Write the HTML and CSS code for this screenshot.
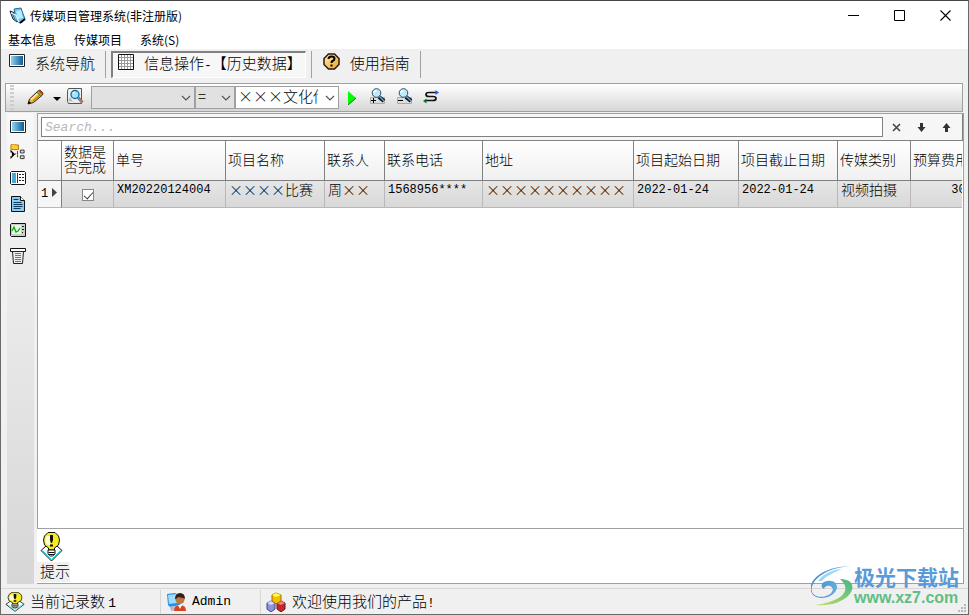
FILE: index.html
```html
<!DOCTYPE html>
<html lang="zh-CN">
<head>
<meta charset="utf-8">
<title>传媒项目管理系统(非注册版)</title>
<link rel="stylesheet" href="styles.css">
</head>
<body>
<svg class="defs" aria-hidden="true">
  <defs>
    <linearGradient id="blue" x1="0" x2="1"><stop offset="0" stop-color="#8fd3f5"/><stop offset="1" stop-color="#0d5c94"/></linearGradient>
    <linearGradient id="gold" x1="0" y1="0" x2="1" y2="1"><stop offset="0" stop-color="#fff3b0"/><stop offset="1" stop-color="#f0a020"/></linearGradient>
    <linearGradient id="swirl" x1="0" x2="1"><stop offset="0" stop-color="#4a86c8"/><stop offset="1" stop-color="#6cc8f0"/></linearGradient>
    <linearGradient id="leaf" x1="0" y1="1" x2="1" y2="0"><stop offset="0" stop-color="#c8e05c"/><stop offset="1" stop-color="#42b58c"/></linearGradient>
    <symbol id="screen" viewBox="0 0 16 13"><path d="M.5.5h15v12H.5z" fill="#fff" stroke="#222"/><path d="M2 2h12v9H2z" fill="url(#blue)"/></symbol>
    <symbol id="bulb" viewBox="0 0 23 30" preserveAspectRatio="none">
      <path d="M1 18.500 11.500 9 22 18.500 11.500 29z" fill="#fff" stroke="#111"/>
      <path d="M2.500 18.500 11.500 27.500l9-9" fill="none" stroke="#22dede"/>
      <path d="M8 .5h7l3.500 3.500 1 4-1 5-4 3v2h-6v-2l-4-3-1-5 1-4z" fill="#f4ec20" stroke="#111"/>
      <path d="M7 4h3v9H8L5.500 11V6z" fill="#fffde0"/><path d="M10 3h3v5l-1 3h-1l-1-3zM10 12.500h3v2h-3z" fill="#111"/>
      <path d="M8 18h7v4l-2.500 2h-2L8 22z" fill="#fff" stroke="#111"/><path d="M8.500 20.500h6M9 22.500h5" stroke="#111"/>
    </symbol>
    <symbol id="lens" viewBox="0 0 17 17">
      <path d="M1.500 9.500h14v6h-14z" fill="#ddd" stroke="#aaa"/><path d="M10 9l5 4" stroke="#111" stroke-width="4"/><path d="M10 8l5 5" stroke="#5aa8dc" stroke-width="1.500"/>
      <circle cx="7.500" cy="5" r="4.300" fill="#bfe9fb" stroke="#24506c"/><path d="M5 5a2.500 2.500 0 0 1 2.500-2.500" fill="none" stroke="#fff" stroke-width="1.500"/>
    </symbol>
    <symbol id="chevron" viewBox="0 0 10 6"><path d="M1 1l4 4 4-4" fill="none" stroke="#555" stroke-width="1.200"/></symbol>
  </defs>
</svg>
<div class="window">
  <header class="titlebar">
    <svg class="app-icon" viewBox="0 0 17 17"><path d="M1 4l5 2 2 9-4-3z" fill="#fff" stroke="#111"/><path d="M5 2l7-1 1 3 3 8-5 4-5-3-3-7 3 1z" fill="#65c4f2" stroke="#2b6c98"/><path d="M7 4l5-1 2 8-5 1z" fill="#bfeaff"/><path d="M2 6l5 2 3 7" fill="none" stroke="#fff"/><path d="M16 12l-5 4" stroke="#000" stroke-width="2"/></svg>
    <h1>传媒项目管理系统(非注册版)</h1>
    <div class="caption-buttons">
      <button aria-label="最小化"><svg viewBox="0 0 11 11"><path d="M0 5.500h11" stroke="#000"/></svg></button>
      <button aria-label="最大化"><svg viewBox="0 0 11 11"><path d="M.5.5h10v10H.5z" fill="none" stroke="#000"/></svg></button>
      <button aria-label="关闭"><svg viewBox="0 0 11 11"><path d="M.5.5l10 10M10.500.5l-10 10" stroke="#000" stroke-width="1.100"/></svg></button>
    </div>
  </header>
  <nav class="menubar">
    <button>基本信息</button><button>传媒项目</button><button>系统(S)</button>
  </nav>
  <nav class="tabs">
    <button class="tab"><svg class="i-screen"><use href="#screen"/></svg>系统导航</button>
    <button class="tab pressed"><svg class="i-grid" viewBox="0 0 17 17"><path d="M.5.5h15v15H.5z" fill="#fff" stroke="#111"/><path d="M3.500 1v14M6.500 1v14M9.500 1v14M12.500 1v14M1 3.500h14M1 6.500h14M1 9.500h14M1 12.500h14" stroke="#999"/></svg><span>信息操作<span class="latin">-</span>【历史数据】</span></button>
    <button class="tab"><svg class="i-help" viewBox="0 0 17 17"><path d="M5.500 1h6L16 5.500v6L11.500 16h-6L1 11.500v-6z" fill="url(#gold)" stroke="#301808" stroke-width="1.500"/><path d="M5.500 6q0-2.500 3-2.500t3 2.200q0 1.500-2 2.300-1 .5-1 2" fill="none" stroke="#000" stroke-width="2"/><path d="M7.500 11.500h2v2h-2z"/></svg>使用指南</button>
  </nav>
  <div class="toolbar">
    <div class="grip"></div>
    <button class="tool pencil" aria-label="编辑"><svg viewBox="0 0 17 16"><path d="M1 15l1.500-5 9-8.500 1.500-.5 3 3-.5 2-9 7.500z" fill="#f6b834" stroke="#222"/><path d="M4 10.500l7-6.500" stroke="#fff0a0" stroke-width="1.500"/><path d="M6 12l7-6" stroke="#b06a10"/><path d="M11 2l2-1 3 3-1 2z" fill="#e83818"/><path d="M10 3l4 4" stroke="#3a9a58" stroke-width="1.500"/><path d="M1 15l.8-3 2.200 2z"/></svg></button>
    <button class="tool drop" aria-label="更多编辑"><svg viewBox="0 0 8 4"><path d="M0 0h8L4 4z"/></svg></button>
    <button class="tool find" aria-label="查找"><svg viewBox="0 0 17 17"><path d="M1.500.5h13v15h-13l-1-2v-11z" fill="#eee" stroke="#555"/><path d="M1 13l2-4 3 5 9 1" fill="#bbb"/><circle cx="8" cy="6.500" r="4" fill="#a5e3fc" stroke="#176a9b" stroke-width="1.300"/><path d="M6 6q0-2 2-2" fill="none" stroke="#fff"/><path d="M11 9.500l4.500 5" stroke="#c8552b" stroke-width="3"/><path d="M11 10l4 4" stroke="#48a5e0" stroke-width="1.300"/></svg></button>
    <div class="combo field"><select aria-label="字段" disabled><option></option></select><svg><use href="#chevron"/></svg></div>
    <div class="combo operator"><select aria-label="条件" disabled><option>=</option></select><svg><use href="#chevron"/></svg></div>
    <div class="combo value"><select aria-label="值"><option>×××文化传媒</option></select><svg><use href="#chevron"/></svg></div>
    <button class="tool run" aria-label="执行"><svg viewBox="0 0 9 14"><path d="M0 0v14l8-7z" fill="#0f0"/><path d="M0 14l8-7" stroke="#161"/></svg></button>
    <button class="tool lens" aria-label="放大"><svg viewBox="0 0 17 17"><use href="#lens"/><path d="M2 12.500h5M4.500 10v5" stroke="#000"/></svg></button>
    <button class="tool lens" aria-label="缩小"><svg viewBox="0 0 17 17"><use href="#lens"/><path d="M2 12.500h5" stroke="#000"/></svg></button>
    <button class="tool refresh" aria-label="刷新"><svg viewBox="0 0 17 14"><path d="M14 2.500H6Q3 2.500 3 4.500t3 2h4q3 0 3 2t-3 2H3" fill="none" stroke="#111" stroke-width="1.700"/><path d="M12.500 0l3.500 2.500-3.500 2.500z" fill="#2457ff"/><path d="M3.500 8.500v5L0 11z" fill="#087820"/></svg></button>
  </div>
  <div class="body">
    <aside class="side">
      <button aria-label="导航"><svg class="i-screen"><use href="#screen"/></svg></button>
      <button aria-label="流程"><svg viewBox="0 0 16 17"><path d="M.5 1l1-1h3l1 1h3v5h-8z" fill="#ffc83c" stroke="#b77700"/><path d="M0 6l5 5-5 5v-3h1.500v-4H0z"/><path d="M5 10.500h3M7.500 8v6M7 8.500h2M7 13.500h2" stroke="#111" stroke-dasharray="1 1"/><path d="M10.500 6.500h4v3h-4zM10.500 12.500h4v3h-4z" fill="#ddd" stroke="#333"/></svg></button>
      <button aria-label="表单"><svg viewBox="0 0 16 14"><path d="M1.500.5h13l1 1v11l-1 1h-13l-1-1v-11z" fill="#fff" stroke="#111"/><path d="M2 2h4v10H2z" fill="#49a7d8"/><path d="M7.500 2v10" stroke="#333"/><path d="M9 3.500h2M12 3.500h2M9 6.500h2M12 6.500h2M9 9.500h2M12 9.500h2" stroke="#222"/></svg></button>
      <button aria-label="文档"><svg viewBox="0 0 16 16"><path d="M1.500.5h9l4 4v11h-13z" fill="#86cdf4" stroke="#111"/><path d="M10.500.5v4h4" fill="#fff" stroke="#111"/><path d="M3.500 3.500h5M3.500 6.500h8M3.500 8.500h9M3.500 10.500h9M3.500 12.500h7" stroke="#123a5c"/></svg></button>
      <button aria-label="图表"><svg viewBox="0 0 16 14"><path d="M1.500.5h14v13h-14l-1-1v-11z" fill="#ccc" stroke="#111"/><path d="M2 2h9v9H2z" fill="#dcffdc"/><path d="M2 8l2-4 2 5 2-1 2-3" fill="none" stroke="#1aa01a" stroke-width="1.300"/><path d="M12 3.500h2M12 6.500h2M12 9.500h1" stroke="#222"/></svg></button>
      <button aria-label="打印"><svg viewBox="0 0 16 16"><path d="M.5.5h15v3H.5z" fill="#fff" stroke="#111"/><path d="M2.500 3.500h11l-1 12h-9z" fill="#eee" stroke="#222"/><path d="M5 5.500h6M5 7.500h6M5 9.500h6M5 11.500h6M5 13.500h6" stroke="#777"/></svg></button>
    </aside>
    <main class="content">
      <section class="grid">
        <div class="search">
          <input type="text" placeholder="Search..." aria-label="搜索">
          <button aria-label="清除"><svg viewBox="0 0 9 9"><path d="M1 1l7 7M8 1L1 8" stroke="#444" stroke-width="1.600"/></svg></button>
          <button aria-label="下一个"><svg viewBox="0 0 9 9"><path d="M3 0h3v4h2.500l-4 5-4-5H3z" fill="#333"/></svg></button>
          <button aria-label="上一个"><svg viewBox="0 0 9 9"><path d="M3 9h3V5h2.500l-4-5-4 5H3z" fill="#333"/></svg></button>
        </div>
        <div class="table-wrap">
        <table>
          <colgroup><col class="c-row"><col class="c-done"><col class="c-no"><col class="c-name"><col class="c-who"><col class="c-tel"><col class="c-addr"><col class="c-from"><col class="c-to"><col class="c-kind"><col class="c-cost"></colgroup>
          <thead><tr><th></th><th class="wrap">数据是<br>否完成</th><th>单号</th><th>项目名称</th><th>联系人</th><th>联系电话</th><th>地址</th><th>项目起始日期</th><th>项目截止日期</th><th>传媒类别</th><th>预算费用</th></tr></thead>
          <tbody><tr>
            <td class="row-no"><span>1</span><svg viewBox="0 0 5 9"><path d="M0 0v9l5-4.500z" fill="#444"/></svg></td>
            <td class="done"><input type="checkbox" checked aria-label="数据是否完成"></td>
            <td class="mono">XM20220124004</td><td>××××比赛</td><td>周××</td><td class="mono">1568956****</td><td>××××××××××</td><td class="mono">2022-01-24</td><td class="mono">2022-01-24</td><td>视频拍摄</td><td class="mono cost">3000</td>
          </tr></tbody>
        </table>
        </div>
      </section>
      <section class="tip">
        <svg class="i-bulb"><use href="#bulb"/></svg>
        <h2>提示</h2>
      </section>
    </main>
  </div>
  <footer class="status">
    <div><svg><use href="#bulb"/></svg><span>当前记录数 <span class="latin">1</span></span></div>
    <div><svg viewBox="0 0 20 20"><path d="M1 2l8-1 4 2 1 10-10 2-2-2z" fill="#2d8fdc"/><path d="M2 3l9-1v9l-8 1z" fill="#9edcff"/><path d="M4 15l6-1 2 4-7 1z" fill="#a7bdd8"/><path d="M8 19q0-6 6-6t6 6z" fill="#d8441c"/><path d="M12 13h4l-2 4z" fill="#fff"/><circle cx="14" cy="7.500" r="4.500" fill="#c27442"/><path d="M9 7q0-6 5-6t5 6l-2-1-5-1-2 2z" fill="#352018"/></svg><span class="latin">Admin</span></div>
    <div><svg viewBox="0 0 20 20"><path d="M1 11l4-2 4 2v6l-4 3-4-3z" fill="#8f92df" stroke="#44457e"/><path d="M1 11l4 2 4-2-4-2z" fill="#d9d9ff"/><path d="M11 11l4-2 4 2v6l-4 3-4-3z" fill="#c5272b" stroke="#661619"/><path d="M11 11l4 2 4-2-4-2z" fill="#f38383"/><path d="M6 3l4-2 5 2v6l-5 3-4-3z" fill="#f5bd00" stroke="#a06d00"/><path d="M6 3l4 2 5-2-5-2z" fill="#ffff45"/></svg><span>欢迎使用我们的产品<span class="latin">!</span></span></div>
    <svg class="resize" viewBox="0 0 9 9"><path d="M6 0h2v2H6zM3 3h2v2H3zM6 3h2v2H6zM0 6h2v2H0zM3 6h2v2H3zM6 6h2v2H6z" fill="#b8b8b8"/></svg>
  </footer>
  <div class="watermark">
    <svg viewBox="0 0 45 40"><path d="M44 0C24 0 7 8 2 18c-5 10 4 15 13 12 7-2 9-8 4-10-3-1-6 1-6 3-4-2-3-7 3-8 8-2 13 5 8 11-6 8-22 8-24-1C-3 12 16-1 44 0z" fill="url(#swirl)"/><path d="M7 15C12 8 20 4 31 3 22 7 15 10 11 15z" fill="#9fd6f5"/><path d="M29 13c13 0 16 9 8 17-8 7-18 10-33 9 14-2 25-6 29-12 3-5 1-9-4-14z" fill="url(#leaf)"/></svg>
    <p><strong>极光下载站</strong><b>www.xz7.com</b></p>
  </div>
</div>
</body>
</html>
```
FILE: styles.css
```css
* { box-sizing: border-box; }
body {
  margin: 0;
  font: 300 15px/20px "Noto Sans CJK SC", "Liberation Sans", sans-serif;
  color: #000;
}
h1, h2, p { margin: 0; font-weight: inherit; }
button { border: 0; padding: 0; background: none; color: inherit; font: inherit; display: flex; align-items: center; }
svg { display: block; flex: none; }
.defs { position: absolute; width: 0; height: 0; }
.latin { font-family: "Liberation Mono", monospace; font-size: 13px; }

.window {
  position: relative;
  display: flex;
  flex-direction: column;
  height: 100vh;
  border: 1px solid #6a6a6a;
  border-top-color: #444;
  background: #f0f0f0;
  overflow: hidden;
}

.titlebar { display: flex; align-items: center; height: 29px; padding-left: 8px; background: #fff; font-weight: 400; }
.titlebar h1 { flex: 1; margin-left: 4px; font-size: 12px; }
.app-icon { width: 17px; height: 17px; }
.caption-buttons { display: flex; }
.caption-buttons button { width: 46px; height: 28px; justify-content: center; }
.caption-buttons svg { width: 11px; height: 11px; }

.menubar { display: flex; gap: 18px; height: 19px; padding-left: 7px; background: #fff; font-size: 12px; font-weight: 400; }

.tabs { display: flex; height: 34px; padding: 2px 0 5px; }
.tab { padding: 0 10px 4px 8px; border-right: 1px solid #a0a0a0; gap: 10px; }
.tab svg { align-self: flex-start; margin-top: 3px; }
.tab.pressed {
  margin: 0 5px;
  padding: 0 3px 2px 5px;
  gap: 9px;
  border: 1px solid #fff;
  border-top: 2px solid #808080;
  border-left: 2px solid #808080;
  background: #f7f7f7;
}
.tab.pressed svg { margin-top: 1px; }
.tab.pressed + .tab { border-left: 1px solid #a0a0a0; padding-left: 11px; }
.i-screen { width: 16px; height: 13px; }
.i-grid, .i-help { width: 17px; height: 17px; }
.tab .i-help { margin-top: 2px; }

.toolbar {
  display: flex;
  align-items: center;
  height: 29px;
  margin: 0 5px 0 4px;
  border: 1px solid #a0a0a0;
  background: linear-gradient(#fff, #d6d6d6);
}
.grip { width: 4px; height: 25px; margin: 0 13px 0 4px; border: dotted #ccc; border-width: 0 2px; }
.tool { justify-content: center; height: 26px; padding-bottom: 2px; }
.tool svg { width: 17px; height: 17px; }
.pencil svg { height: 16px; }
.drop { width: 8px; margin: 0 6px 0 9px; padding-top: 5px; }
.drop svg { width: 8px; height: 4px; }
.combo { position: relative; height: 23px; }
.combo select {
  display: block;
  width: 100%;
  height: 100%;
  padding: 0 20px 3px 2px;
  border: 1px solid #a0a0a0;
  border-radius: 0;
  background: #fff;
  appearance: none;
  color: #000;
  font: inherit;
  line-height: 18px;
  opacity: 1;
}
.combo select:disabled { background: #e1e1e1; }
.combo svg { position: absolute; right: 4px; top: 9px; width: 10px; height: 6px; pointer-events: none; }
.field { width: 104px; margin-left: 7px; }
.operator { width: 40px; }
.value { width: 104px; }
.run { margin: 0 12px 0 9px; padding: 0; }
.tool.run svg { width: 9px; height: 14px; }
.lens { margin-right: 10px; }
.tool.refresh svg { height: 14px; }

.body { display: flex; flex: 1; min-height: 0; padding: 1px 4px 4px 6px; }
.side { width: 27px; margin-right: 3px; background: linear-gradient(#f8f8f8, #d6d6d6); }
.side button { width: 22px; height: 26px; justify-content: center; }
.side svg { width: 16px; height: 16px; }
.side .i-screen { height: 13px; }
.content { display: flex; flex-direction: column; flex: 1; min-width: 0; }
.grid { flex: 1; min-height: 0; border: 1px solid #a0a0a0; background: #fff; overflow: hidden; }

.search {
  display: flex;
  align-items: center;
  height: 27px;
  padding: 0 3px;
  border: solid #808080;
  border-width: 0 1px 1px 0;
  background: #f6f6f6;
}
.search input {
  flex: 1;
  min-width: 0;
  height: 20px;
  margin-right: 1px;
  padding: 0 3px;
  border: 1px solid #808080;
  font: italic 13px/18px "Liberation Mono", monospace;
}
.search input::placeholder { color: #b8b8b8; }
.search button { width: 25px; height: 20px; justify-content: center; }
.search svg { width: 9px; height: 9px; }

.table-wrap { overflow: hidden; margin-right: 1px; }
table { width: 0; table-layout: fixed; border-collapse: separate; border-spacing: 0; font-size: 14px; }
.c-row { width: 24px; }
.c-done { width: 52px; }
.c-no { width: 112px; }
.c-name { width: 99px; }
.c-who { width: 60px; }
.c-tel { width: 98px; }
.c-addr { width: 151px; }
.c-from { width: 105px; }
.c-to { width: 99px; }
.c-kind { width: 73px; }
.c-cost { width: 73px; }
th, td { white-space: nowrap; text-align: left; border-right: 1px solid #808080; }
th {
  height: 40px;
  padding: 0 2px 3px;
  border-bottom: 1px solid #808080;
  background: linear-gradient(#fff, #f0f0f0);
  font-weight: inherit;
}
th.wrap { line-height: 15px; }
td {
  height: 27px;
  padding: 0 3px;
  border-color: #b8b8b8;
  border-bottom: 1px solid #b8b8b8;
  background: linear-gradient(#e6e6e6, #d8d8d8);
  line-height: 16px;
  vertical-align: top;
}
.mono, .row-no { font-family: "Liberation Mono", monospace; font-size: 12px; }
.mono { line-height: 18px; }
.cost { text-align: right; }
.row-no { border-right-color: #808080; background: #f6f6f6; line-height: 26px; }
.row-no svg { display: inline-block; width: 5px; height: 9px; margin-left: 4px; }
td.done { text-align: center; }
.done input { appearance: none; position: relative; width: 12px; height: 12px; margin: 8px 0 0; border: 1px solid #888; background: #fff; }
.done input:checked::after {
  content: "";
  position: absolute;
  left: 3px;
  top: 0;
  width: 4px;
  height: 8px;
  border: solid #444;
  border-width: 0 1px 1px 0;
  transform: rotate(42deg);
}

.tip { height: 55px; padding-top: 3px; border: solid #a0a0a0; border-width: 0 1px 1px 0; background: #fff; }
.i-bulb { width: 23px; height: 30px; margin-left: 3px; }
.tip h2 { width: 33px; padding: 0 0 2px 3px; background: #f0f0f0; font-size: 15px; line-height: 18px; }

.status { display: grid; grid-template-columns: 160px 100px 1fr auto; height: 26px; border-top: 1px solid #d7d7d7; }
.status div { display: flex; align-items: center; gap: 5px; padding-left: 4px; margin-top: 1px; border-right: 1px solid #d7d7d7; }
.status div + div { padding-left: 5px; gap: 6px; }
.status div:nth-child(3) { border: 0; }
.status div > svg { width: 20px; height: 20px; }
.status .resize { width: 9px; height: 9px; align-self: end; margin: 0 1px 1px 0; }

.watermark { position: absolute; right: 9px; bottom: 6px; display: flex; align-items: center; pointer-events: none; }
.watermark svg { width: 45px; height: 40px; margin-right: -2px; }
.watermark p { display: flex; flex-direction: column; }
.watermark strong { color: #5b9ad8; font-size: 21px; font-weight: 700; line-height: 24px; }
.watermark b { color: #62bd84; font: bold 16px/20px "Liberation Sans", sans-serif; }
```
